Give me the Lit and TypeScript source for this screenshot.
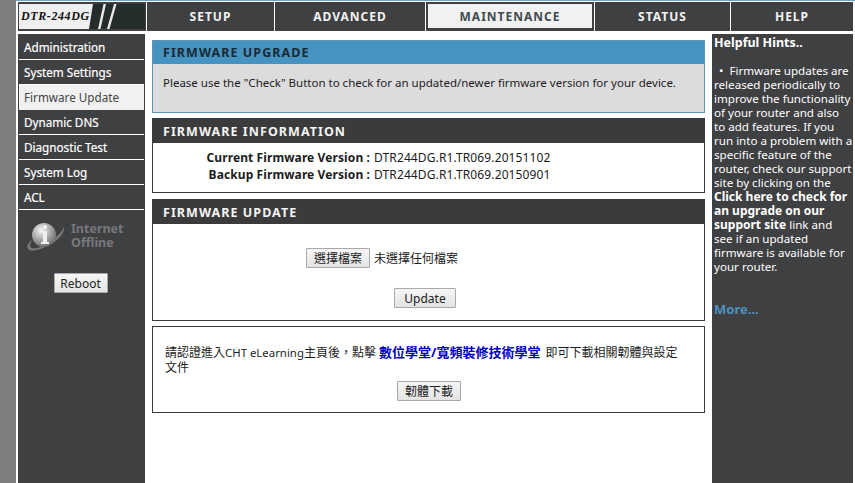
import { LitElement, html, css } from "lit";
import { customElement } from "lit/decorators.js";

@customElement("app-root")
export class AppRoot extends LitElement {
  static styles = css`
    :host { display: block; width: 855px; height: 483px; overflow: hidden; background: #7f7f7f; font-family: "Noto Sans", "Noto Sans CJK TC", sans-serif; font-size: 11.5px; color: #1c1c1c; }
    * { box-sizing: border-box; }
    .page { margin-left: 16px; width: 839px; height: 483px; background: #fff; padding: 1px 2px 0 2px; display: flex; flex-direction: column; border-top: 1px solid #6fa3c4; }
    .top { display: flex; height: 29px; gap: 1px; flex: none; }
    .logo { width: 128px; flex: none; background: #3f4042; padding: 2px 1px; }
    .logo-in { position: relative; height: 25px; background: #252c2c; overflow: hidden; display: flex; align-items: center; }
    .logo-in svg { position: absolute; left: 0; top: 0; }
    .logo-t { position: relative; padding-left: 2px; color: #111; font: italic bold 12px "Liberation Serif", serif; letter-spacing: .6px; }
    .tab { background: #3f4042; color: #f2f2f2; font-weight: 700; font-size: 12px; letter-spacing: 1px; display: flex; align-items: center; justify-content: center; flex: none; }
    .tab.active { background: #f1f1f1; color: #414a50; border: solid #3f4042; border-width: 2px 2px 3px; }
    .cols { display: flex; flex: 1; margin-top: 3px; min-height: 0; }
    .side { width: 127px; background: #3f4042; color: #fff; padding: 1px 1px 0; flex: none; }
    .side a { display: flex; align-items: center; height: 25px; padding: 0 0 0 5px; font-size: 11.7px; border-bottom: 1px solid #fff; -webkit-text-stroke: .2px #fff; }
    .side a.on { background: #f1f1f1; color: #444; border-bottom: 0; padding-bottom: 2px; -webkit-text-stroke: 0; }
    .status { display: flex; gap: 5px; margin: 10px 0 0 7px; align-items: center; color: #77787a; font-weight: 700; font-size: 12.5px; line-height: 14px; }
    .status div { padding-bottom: 2px; }
    .reboot-row { display: flex; justify-content: center; margin-top: 19px; padding-right: 2px; }
    button { font-family: inherit; font-size: 12px; color: #222; background: linear-gradient(#f6f6f6, #e3e3e3); border: 1px solid #a9a9a9; border-radius: 1px; padding: 0; height: 20px; display: inline-flex; align-items: center; justify-content: center; }
    .main { width: 567px; flex: none; padding: 6px 7px 0 7px; display: flex; flex-direction: column; gap: 5px; }
    .box { border: 1px solid #3b3b3b; background: #fff; flex: none; }
    .box h2 { margin: 0; height: 24px; background: #3b3b3b; color: #f4f4f4; font-size: 12.5px; font-weight: 700; letter-spacing: 1.05px; padding-left: 10px; display: flex; align-items: center; }
    .box.blue { border-color: #5d94b5; background: #dcdcdc; height: 73px; }
    .box.blue h2 { background: #4692c1; color: #1a2a35; height: 23px; }
    .blue p { margin: 0; padding: 11px 0 0 10px; font-size: 11.5px; }
    .fw { height: 75px; }
    .rows { padding-top: 6px; font-size: 12px; }
    .row { display: flex; height: 17px; align-items: center; }
    .row b { width: 217px; text-align: right; font-weight: 700; letter-spacing: .1px; }
    .row span { padding-left: 4px; letter-spacing: .12px; }
    .update { height: 122px; margin-top: 1px; }
    .file { display: flex; align-items: center; padding: 24px 0 0 153px; font-size: 12px; }
    .file button { width: 64px; }
    .file span { margin-left: 4px; }
    .up { display: flex; justify-content: flex-start; margin-top: 20px; padding-left: 241px; }
    .up button { width: 62px; }
    .cht { height: 87px; padding: 18px 0 0 12px; line-height: 15px; font-size: 12px; }
    .cht i { font-style: normal; font-size: 11.4px; }
    .cht b { color: #0000c0; font-weight: 700; font-size: 13px; margin-right: 2px; }
    .dl { display: flex; justify-content: flex-start; margin-top: 6px; padding-left: 232px; }
    .dl button { width: 64px; }
    .hints { flex: 1; background: #3f4042; color: #fff; padding: 0 0 0 2px; font-size: 11.6px; line-height: 14px; white-space: nowrap; }
    .hints .t { font-weight: 700; font-size: 12.5px; margin: 2px 0 14px; line-height: 14px; }
    .hints b { font-weight: 700; font-size: 12px; }
    .lead { padding-left: 2px; }
    .more { margin-top: 28px; color: #4f8fbf; font-weight: 700; font-size: 13px; }
  `;

  render() {
    const tabs: [string, number, boolean][] = [
      ["SETUP", 127, false], ["ADVANCED", 150, false], ["MAINTENANCE", 168, true],
      ["STATUS", 135, false], ["HELP", 122, false],
    ];
    const items = ["Administration", "System Settings", "Firmware Update", "Dynamic DNS", "Diagnostic Test", "System Log", "ACL"];
    return html`<div class="page">
      <div class="top">
        <div class="logo">
          <div class="logo-in">
            <svg width="126" height="25" viewBox="0 0 126 25">
              <path d="M0 0H74L70 25H0Z" fill="#efefef"/>
              <path d="M84.500 0L79 25H81.500L87 0Z M95 0L88 25H90.500L97.500 0Z" fill="#e8e8e8"/>
            </svg>
            <span class="logo-t">DTR-244DG</span>
          </div>
        </div>
        ${tabs.map(([t, w, a]) => html`<div class="tab ${a ? "active" : ""}" style="width:${w}px">${t}</div>`)}
      </div>
      <div class="cols">
        <div class="side">
          ${items.map((i) => html`<a class="${i === "Firmware Update" ? "on" : ""}">${i}</a>`)}
          <div class="status">
            <svg width="40" height="34" viewBox="0 0 40 34">
              <defs><radialGradient id="g" cx=".38" cy=".3" r=".8"><stop offset="0" stop-color="#f4f4f4"/><stop offset=".55" stop-color="#a0a0a0"/><stop offset="1" stop-color="#5a5a5a"/></radialGradient></defs>
              <path d="M37 7C40 9 36 17 27 23C17 29 5 33 2 29C0 26 3 22 6 20C4 24 3 27 6 28C10 30 19 25 26 20C33 15 38 10 37 7Z" fill="#77787a"/>
              <circle cx="18" cy="15" r="12" fill="url(#g)"/>
              <circle cx="19" cy="7" r="2" fill="#f0f0f0"/>
              <path d="M15 11h6v11h2v2h-8v-2h2v-9h-2z" fill="#f0f0f0"/>
            </svg>
            <div>Internet<br />Offline</div>
          </div>
          <div class="reboot-row"><button style="width:54px">Reboot</button></div>
        </div>
        <div class="main">
          <div class="box blue">
            <h2>FIRMWARE UPGRADE</h2>
            <p>Please use the "Check" Button to check for an updated/newer firmware version for your device.</p>
          </div>
          <div class="box fw">
            <h2>FIRMWARE INFORMATION</h2>
            <div class="rows">
              <div class="row"><b>Current Firmware Version :</b><span>DTR244DG.R1.TR069.20151102</span></div>
              <div class="row"><b>Backup Firmware Version :</b><span>DTR244DG.R1.TR069.20150901</span></div>
            </div>
          </div>
          <div class="box update">
            <h2>FIRMWARE UPDATE</h2>
            <div class="file"><button>選擇檔案</button><span>未選擇任何檔案</span></div>
            <div class="up"><button>Update</button></div>
          </div>
          <div class="box cht">
            請認證進入<i>CHT eLearning</i>主頁後，點擊 <b>數位學堂/寬頻裝修技術學堂</b> 即可下載相關韌體與設定<br />文件
            <div class="dl"><button>韌體下載</button></div>
          </div>
        </div>
        <div class="hints">
          <div class="t">Helpful Hints..</div>
          <div><span class="lead">&nbsp;• &nbsp;</span>Firmware updates are<br />released periodically to<br />improve the functionality<br />of your router and also<br />to add features. If you<br />run into a problem with a<br />specific feature of the<br />router, check our support<br />site by clicking on the<br /><b>Click here to check for<br />an upgrade on our<br />support site</b> link and<br />see if an updated<br />firmware is available for<br />your router.</div>
          <div class="more">More...</div>
        </div>
      </div>
    </div>`;
  }
}
